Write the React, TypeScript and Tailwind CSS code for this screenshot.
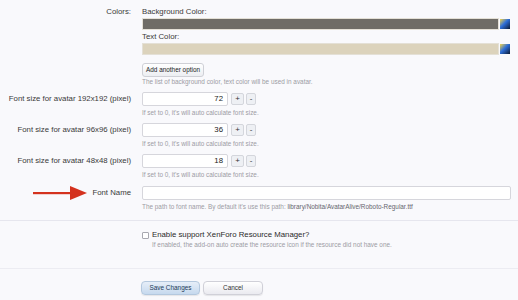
import React from "react";

const Hint = ({ children }: { children: React.ReactNode }) => (
  <div className="text-[6.4px] leading-[8px] text-[#9c9ca4]">{children}</div>
);

const Swatch = ({ color }: { color: string }) => (
  <div className="flex items-center h-[12px]">
    <div className={"flex-1 h-[12px] border border-[#e4e0d6] " + color} />
    <div className="ml-[1px] w-[10px] h-[10px] bg-[linear-gradient(135deg,#f6d64a_0%,#2f6fd8_45%,#0c1a33_100%)]" />
  </div>
);

const SpinRow = ({ label, value }: { label: string; value: string }) => (
  <div className="flex">
    <div className="w-[131px] shrink-0 text-right leading-[14px]">{label}</div>
    <div className="ml-[11px]">
      <div className="flex items-center">
        <div className="w-[86px] h-[14px] bg-white border border-[#d6d6dc] rounded-[2px] text-right pr-[4px] leading-[12px] text-[#222]">
          {value}
        </div>
        <button className="ml-[3px] w-[13px] h-[12px] rounded-[2px] border border-[#d4d6dc] bg-[#eef0f4] text-[8px] leading-[10px] text-[#333]">
          +
        </button>
        <button className="ml-[2px] w-[10px] h-[12px] rounded-[2px] border border-[#d4d6dc] bg-[#eef0f4] text-[8px] leading-[10px] text-[#333]">
          -
        </button>
      </div>
      <div className="mt-[3px]">
        <Hint>If set to 0, it's will auto calculate font size.</Hint>
      </div>
    </div>
  </div>
);

export default function App() {
  return (
    <div className="min-h-screen bg-[#f9f9fc] font-['Liberation_Sans',Arial,sans-serif] text-[7.8px] text-[#3a3a3a]">
      <div className="pt-[7px] flex flex-col gap-[6px]">
        <div className="flex">
          <div className="w-[131px] shrink-0 text-right leading-[10px]">Colors:</div>
          <div className="ml-[11px] flex-1 pr-[8px]">
            <div className="leading-[10px]">Background Color:</div>
            <div className="mt-[1px]">
              <Swatch color="bg-[#6f6c66]" />
            </div>
            <div className="mt-[2px] leading-[10px]">Text Color:</div>
            <div className="mt-[1px]">
              <Swatch color="bg-[#dcd3bc]" />
            </div>
            <button className="mt-[8px] h-[14px] px-[3px] rounded-[3px] border border-[#cfd0d6] bg-[linear-gradient(#ffffff,#eceef2)] text-[6.4px] leading-[12px] text-[#222]">
              Add another option
            </button>
            <div className="mt-[1px]">
              <Hint>The list of background color, text color will be used in avatar.</Hint>
            </div>
          </div>
        </div>

        <SpinRow label="Font size for avatar 192x192 (pixel)" value="72" />
        <SpinRow label="Font size for avatar 96x96 (pixel)" value="36" />
        <SpinRow label="Font size for avatar 48x48 (pixel)" value="18" />

        <div className="flex mt-[1px]">
          <div className="w-[131px] shrink-0 flex items-center h-[14px] pl-[33px]">
            <svg width="54" height="14" viewBox="0 0 54 14">
              <rect x="0" y="6" width="39" height="2.2" fill="#d4321e" />
              <polygon points="37,0 54,7 37,14" fill="#d4321e" />
            </svg>
            <span className="ml-auto leading-[14px]">Font Name</span>
          </div>
          <div className="ml-[11px] flex-1 pr-[7px]">
            <div className="h-[14px] bg-white border border-[#d6d6dc] rounded-[2px]" />
            <div className="mt-[3px]">
              <Hint>
                The path to font name. By default it's use this path:{" "}
                <span className="text-[#66666e]">library/Nobita/AvatarAlive/Roboto-Regular.ttf</span>
              </Hint>
            </div>
          </div>
        </div>
      </div>

      <div className="mt-[9px] border-t border-[#e6e6ee]" />

      <div className="pt-[9px] pl-[142px]">
        <label className="flex items-center leading-[10px] text-[#2a2a2a]">
          <span className="w-[7px] h-[7px] border border-[#a8a8b0] rounded-[1px] bg-white mr-[3px]" />
          Enable support XenForo Resource Manager?
        </label>
        <div className="pl-[10px] mt-[1px]">
          <Hint>If enabled, the add-on auto create the resource icon if the resource did not have one.</Hint>
        </div>
      </div>

      <div className="mt-[19px] border-t border-[#ececf2]" />

      <div className="pt-[12px] pl-[141px] flex gap-[3px]">
        <button className="w-[59px] h-[14px] rounded-[4px] border border-[#b4c8de] bg-[linear-gradient(#e6eef8,#c6d9ee)] text-[6.4px] leading-[12px] text-[#223a58] shadow-[0_1px_1px_rgba(0,0,0,0.08)]">
          Save Changes
        </button>
        <button className="w-[60px] h-[14px] rounded-[4px] border border-[#d0d0d8] bg-[linear-gradient(#ffffff,#eaeaf0)] text-[6.4px] leading-[12px] text-[#333] shadow-[0_1px_1px_rgba(0,0,0,0.08)]">
          Cancel
        </button>
      </div>
    </div>
  );
}
